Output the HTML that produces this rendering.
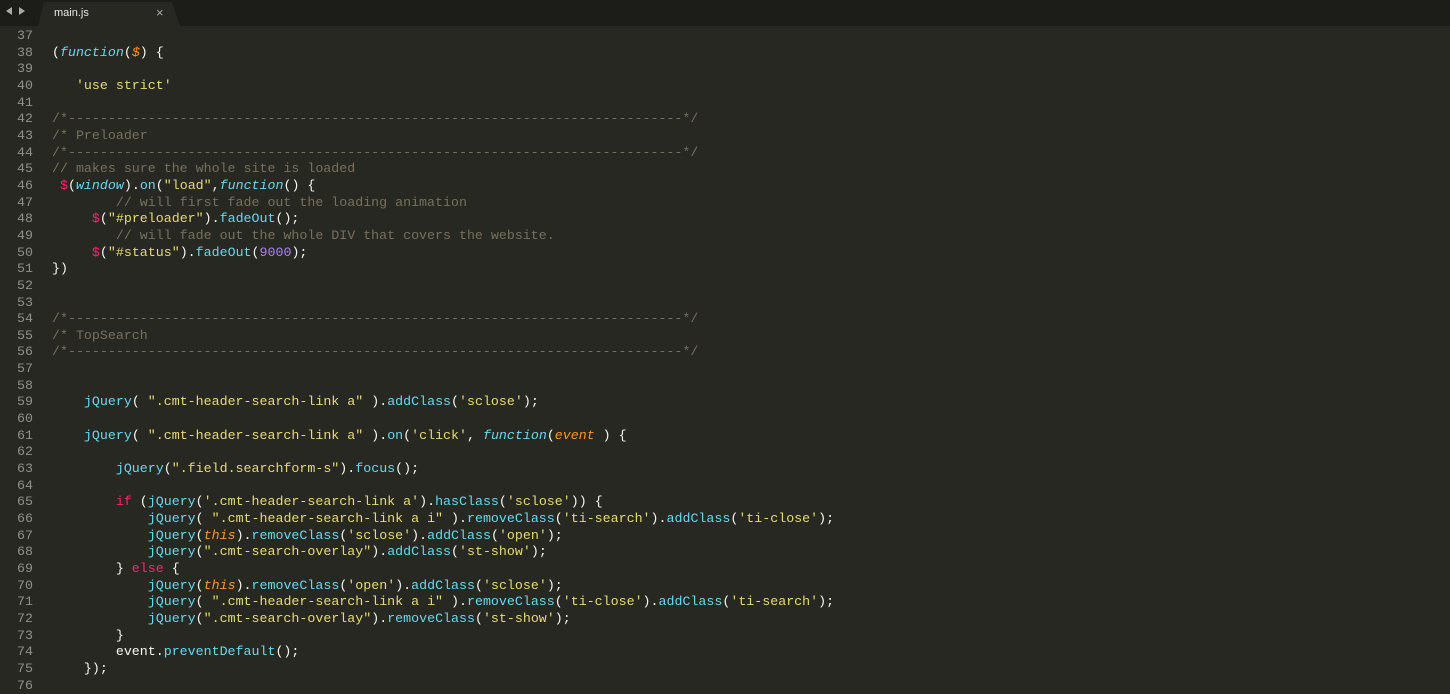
<!DOCTYPE html>
<html><head><meta charset="utf-8"><style>
body{margin:0;width:1450px;height:688px;background:#272822;overflow:hidden;font-family:"Liberation Mono",monospace;}
#tabbar{position:absolute;left:0;top:0;width:1450px;height:26px;background:#1c1c19;}
#tab{position:absolute;left:38px;top:2px;width:142px;height:24px;background:#272822;clip-path:polygon(6px 0,134px 0,142px 24px,0 24px);}
#tab span{position:absolute;left:16px;top:5px;font:11px "Liberation Sans",sans-serif;color:#e8e8e8;}
#tab b{position:absolute;left:118px;top:3px;font:13px "Liberation Sans",sans-serif;color:#aaa;}
.arr{position:absolute;top:7px;width:0;height:0;border-top:4px solid transparent;border-bottom:4px solid transparent;}
#code{position:absolute;left:0;top:28px;}
.l{height:16.66px;line-height:16.66px;font-size:13.3px;white-space:pre;position:relative;color:#f8f8f2;}
.n{display:inline-block;width:33px;text-align:right;color:#8f908a;margin-right:19px;}
.c{color:#75715e}.s{color:#e6db74}.f{color:#66d9ef;font-style:italic}.p{color:#fd971f;font-style:italic}.m{color:#66d9ef}.k{color:#f92672}.d{color:#ae81ff}
</style></head><body>
<div id="tabbar"><div class="arr" style="left:6px;border-right:6px solid #aaa"></div><div class="arr" style="left:19px;border-left:6px solid #aaa"></div>
<div id="tab"><span>main.js</span><b>×</b></div></div>
<div id="code">
<div class="l"><span class="n">37</span></div>
<div class="l"><span class="n">38</span>(<span class="f">function</span>(<span class="p">$</span>) {</div>
<div class="l"><span class="n">39</span></div>
<div class="l"><span class="n">40</span>   <span class="s">'use strict'</span></div>
<div class="l"><span class="n">41</span></div>
<div class="l"><span class="n">42</span><span class="c">/*-----------------------------------------------------------------------------*/</span></div>
<div class="l"><span class="n">43</span><span class="c">/* Preloader</span></div>
<div class="l"><span class="n">44</span><span class="c">/*-----------------------------------------------------------------------------*/</span></div>
<div class="l"><span class="n">45</span><span class="c">// makes sure the whole site is loaded</span></div>
<div class="l"><span class="n">46</span> <span class="k">$</span>(<span class="f">window</span>).<span class="m">on</span>(<span class="s">"load"</span>,<span class="f">function</span>() {</div>
<div class="l"><span class="n">47</span>        <span class="c">// will first fade out the loading animation</span></div>
<div class="l"><span class="n">48</span>     <span class="k">$</span>(<span class="s">"#preloader"</span>).<span class="m">fadeOut</span>();</div>
<div class="l"><span class="n">49</span>        <span class="c">// will fade out the whole DIV that covers the website.</span></div>
<div class="l"><span class="n">50</span>     <span class="k">$</span>(<span class="s">"#status"</span>).<span class="m">fadeOut</span>(<span class="d">9000</span>);</div>
<div class="l"><span class="n">51</span>})</div>
<div class="l"><span class="n">52</span></div>
<div class="l"><span class="n">53</span></div>
<div class="l"><span class="n">54</span><span class="c">/*-----------------------------------------------------------------------------*/</span></div>
<div class="l"><span class="n">55</span><span class="c">/* TopSearch</span></div>
<div class="l"><span class="n">56</span><span class="c">/*-----------------------------------------------------------------------------*/</span></div>
<div class="l"><span class="n">57</span></div>
<div class="l"><span class="n">58</span></div>
<div class="l"><span class="n">59</span>    <span class="m">jQuery</span>( <span class="s">".cmt-header-search-link a"</span> ).<span class="m">addClass</span>(<span class="s">'sclose'</span>);</div>
<div class="l"><span class="n">60</span></div>
<div class="l"><span class="n">61</span>    <span class="m">jQuery</span>( <span class="s">".cmt-header-search-link a"</span> ).<span class="m">on</span>(<span class="s">'click'</span>, <span class="f">function</span>(<span class="p">event</span> ) {</div>
<div class="l"><span class="n">62</span></div>
<div class="l"><span class="n">63</span>        <span class="m">jQuery</span>(<span class="s">".field.searchform-s"</span>).<span class="m">focus</span>();</div>
<div class="l"><span class="n">64</span></div>
<div class="l"><span class="n">65</span>        <span class="k">if</span> (<span class="m">jQuery</span>(<span class="s">'.cmt-header-search-link a'</span>).<span class="m">hasClass</span>(<span class="s">'sclose'</span>)) {</div>
<div class="l"><span class="n">66</span>            <span class="m">jQuery</span>( <span class="s">".cmt-header-search-link a i"</span> ).<span class="m">removeClass</span>(<span class="s">'ti-search'</span>).<span class="m">addClass</span>(<span class="s">'ti-close'</span>);</div>
<div class="l"><span class="n">67</span>            <span class="m">jQuery</span>(<span class="p">this</span>).<span class="m">removeClass</span>(<span class="s">'sclose'</span>).<span class="m">addClass</span>(<span class="s">'open'</span>);</div>
<div class="l"><span class="n">68</span>            <span class="m">jQuery</span>(<span class="s">".cmt-search-overlay"</span>).<span class="m">addClass</span>(<span class="s">'st-show'</span>);</div>
<div class="l"><span class="n">69</span>        } <span class="k">else</span> {</div>
<div class="l"><span class="n">70</span>            <span class="m">jQuery</span>(<span class="p">this</span>).<span class="m">removeClass</span>(<span class="s">'open'</span>).<span class="m">addClass</span>(<span class="s">'sclose'</span>);</div>
<div class="l"><span class="n">71</span>            <span class="m">jQuery</span>( <span class="s">".cmt-header-search-link a i"</span> ).<span class="m">removeClass</span>(<span class="s">'ti-close'</span>).<span class="m">addClass</span>(<span class="s">'ti-search'</span>);</div>
<div class="l"><span class="n">72</span>            <span class="m">jQuery</span>(<span class="s">".cmt-search-overlay"</span>).<span class="m">removeClass</span>(<span class="s">'st-show'</span>);</div>
<div class="l"><span class="n">73</span>        }</div>
<div class="l"><span class="n">74</span>        event.<span class="m">preventDefault</span>();</div>
<div class="l"><span class="n">75</span>    });</div>
<div class="l"><span class="n">76</span></div>
</div>
</body></html>
